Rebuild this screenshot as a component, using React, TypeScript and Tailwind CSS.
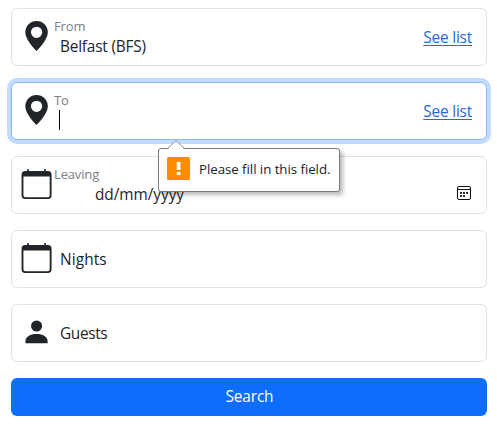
import type { ReactNode } from "react";

const PIN = "M8 16s6-5.686 6-10A6 6 0 0 0 2 6c0 4.314 6 10 6 10m0-7a3 3 0 1 1 0-6 3 3 0 0 1 0 6";
const CALENDAR =
  "M3.5 0a.5.5 0 0 1 .5.5V1h8V.5a.5.5 0 0 1 1 0V1h1a2 2 0 0 1 2 2v11a2 2 0 0 1-2 2H2a2 2 0 0 1-2-2V3a2 2 0 0 1 2-2h1V.5a.5.5 0 0 1 .5-.5M1 4v10a1 1 0 0 0 1 1h12a1 1 0 0 0 1-1V4z";
const PERSON = "M2.1 13.95v-1C2.1 10.5 4.6 9.1 8 9.1s5.9 1.4 5.9 3.85v1zM8 7.75a2.95 2.95 0 1 0 0-5.9 2.95 2.95 0 0 0 0 5.9";

function Icon({ path }: { path: string }) {
  return (
    <svg viewBox="0.2 0 16 16" className="-ml-px mr-px size-[30px] shrink-0 overflow-visible fill-[#212529]" aria-hidden="true">
      <path d={path} transform="translate(0.5 0)" />
    </svg>
  );
}

function Field({ icon, focused, children }: { icon: string; focused?: boolean; children: ReactNode }) {
  return (
    <div
      className={
        "relative flex h-[58px] rounded-md border bg-white pt-3 pl-[10px] " +
        (focused ? "border-[#86b7fe] ring-4 ring-[#c2dbfe]" : "border-[#dee2e6]")
      }
    >
      <Icon path={icon} />
      {children}
    </div>
  );
}

function Label({ children }: { children: ReactNode }) {
  return <div className="-mt-[3px] h-[17px] pl-[2px] text-[13px] leading-[17px] tracking-[-0.15px] text-[#7c8084]">{children}</div>;
}

function SeeList() {
  return (
    <a href="#" className="mt-[5px] mr-[14px] ml-auto h-6 text-[15.4px] leading-6 tracking-[-0.2px] text-[#2468d8] underline decoration-1 underline-offset-2">
      See list
    </a>
  );
}

function ValidationBubble() {
  return (
    <div className="absolute top-[65px] left-[146px] z-10 flex h-[44px] w-[182px] items-center rounded-[3px] border border-[#77797c] bg-white pl-2 shadow-[3px_3px_4px_rgba(0,0,0,0.28)]">
      <svg viewBox="0 0 18 10" className="absolute -top-[9px] left-[8px] h-[10px] w-[18px]" aria-hidden="true">
        <path d="M0 10 9 1l9 9z" fill="white" />
        <path d="M.5 8.5 9 .7l8.5 7.8" fill="none" stroke="#8794a8" />
      </svg>
      <svg viewBox="0 0 23 23" className="mb-[3px] size-[23px] shrink-0" aria-hidden="true">
        <rect width="23" height="23" rx="1.5" fill="#ff8c00" />
        <path d="M9.7 5h3.8v8H9.7zM9.7 15h3.8v3H9.7z" fill="white" />
      </svg>
      <span className="ml-[9px] text-[13.3px] tracking-[-0.05px] whitespace-nowrap text-[#202124]">Please fill in this field.</span>
    </div>
  );
}

export default function App() {
  return (
    <form className="flex h-[427px] w-[497px] flex-col gap-4 bg-white pt-2 pr-[10px] pl-[11px] font-['Open_Sans','Noto_Sans',sans-serif] text-[15.4px] text-[#212529]">
      <Field icon={PIN}>
        <div>
          <Label>From</Label>
          <div className="pl-2 leading-6 tracking-[-0.2px]">Belfast (BFS)</div>
        </div>
        <SeeList />
      </Field>
      <Field icon={PIN} focused>
        <div>
          <Label>To</Label>
          <div className="mt-px ml-[7px] h-5 w-px bg-black" />
        </div>
        <SeeList />
        <ValidationBubble />
      </Field>
      <Field icon={CALENDAR}>
        <div>
          <Label>Leaving</Label>
          <div className="pl-[43px] leading-6 tracking-[-0.05px]">dd/mm/yyyy</div>
        </div>
        <svg viewBox="0 0 14 14" className="mt-[17px] mr-[15px] ml-auto size-[14px]" aria-hidden="true">
          <rect x=".5" y=".5" width="13" height="13" rx="1.5" fill="none" stroke="#111" />
          <path d="M1 3.5h12" stroke="#111" />
          <path d="M3 6h2v2H3zM6 6h2v2H6zM9 6h2v2H9zM3 9h2v2H3zM6 9h2v2H6z" fill="#333" />
        </svg>
      </Field>
      <Field icon={`${CALENDAR}M1 2h14v2H1z`}>
        <div className="mt-[5px] pl-2 leading-6 tracking-[0.1px]">Nights</div>
      </Field>
      <Field icon={PERSON}>
        <div className="mt-[5px] pl-2 leading-6 tracking-[-0.35px]">Guests</div>
      </Field>
      <button type="button" className="h-[38px] rounded-md bg-[#0d6efd] pl-px tracking-[-0.15px] text-white">
        Search
      </button>
    </form>
  );
}
